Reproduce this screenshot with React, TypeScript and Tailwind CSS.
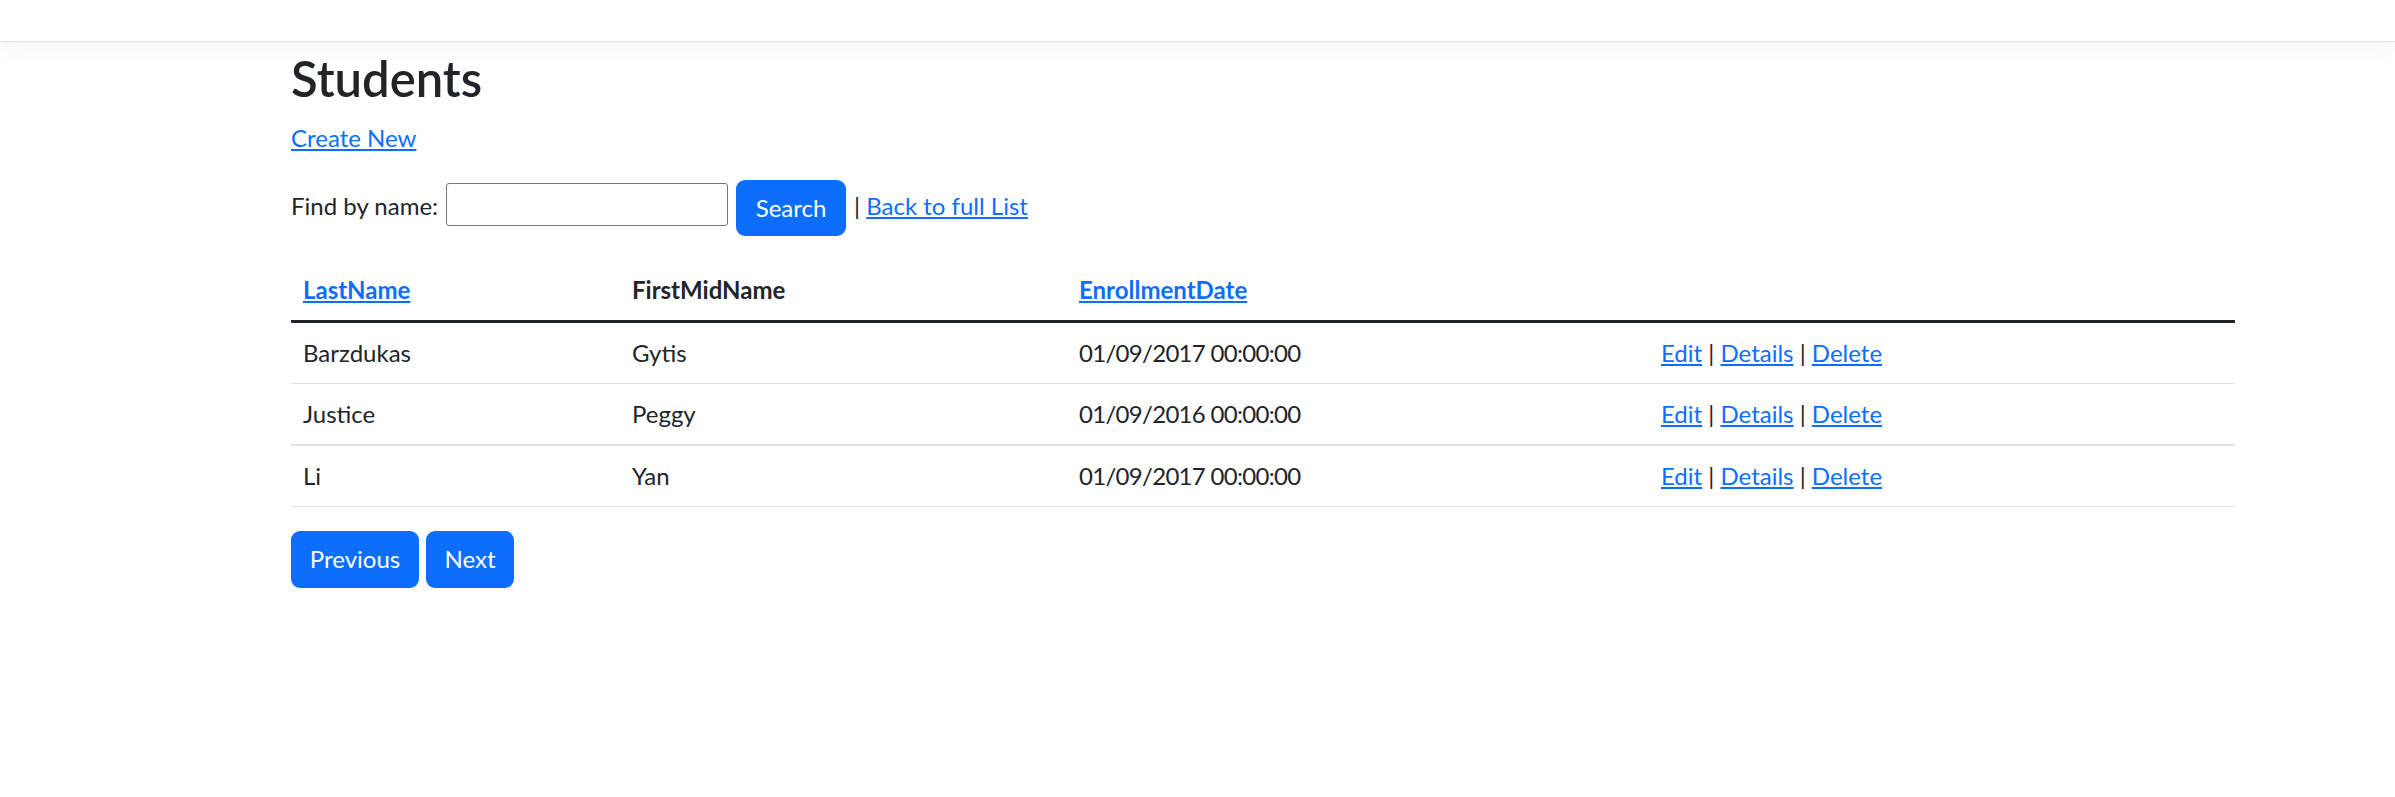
import React from "react";

const rows = [
  { last: "Barzdukas", first: "Gytis", date: "01/09/2017 00:00:00", border: "border-b border-[#dee2e6]" },
  { last: "Justice", first: "Peggy", date: "01/09/2016 00:00:00", border: "border-b-2 border-[#dee2e6]" },
  { last: "Li", first: "Yan", date: "01/09/2017 00:00:00", border: "border-b border-[#dee2e6]" },
];

function Link({ children }: { children: React.ReactNode }) {
  return (
    <a href="#" className="text-[#0d6efd] underline">
      {children}
    </a>
  );
}

export default function App() {
  return (
    <div
      className="min-h-[797px] w-[2395px] bg-white text-[#212529]"
      style={{ fontFamily: 'Lato, "Liberation Sans", sans-serif' }}
    >
      <div className="h-[42px] border-b border-[#dee2e6] bg-white shadow-[0_6px_18px_rgba(0,0,0,0.05)]" />
      <div className="pl-[291px] w-[2235px]">
        <h1 className="mt-[7px] mb-[12px] text-[49px] font-semibold leading-[1.2]">Students</h1>
        <p className="mb-[24px] text-[24px] leading-[36px]">
          <Link>Create New</Link>
        </p>
        <div className="mb-[24px] flex items-start text-[24px] leading-[36px]">
          <span className="mt-[8px]">Find by name:</span>
          <input
            type="text"
            className="mt-[3px] ml-[8px] h-[43px] w-[282px] rounded-[3px] border border-[#767676] bg-white"
          />
          <button className="ml-[8px] h-[56px] w-[110px] rounded-[9px] bg-[#0d6efd] text-center text-[24px] leading-[36px] text-white">
            Search
          </button>
          <span className="mt-[8px] ml-[8px]">
            | <Link>Back to full List</Link>
          </span>
        </div>
        <div className="text-[24px] leading-[36px]">
          <div className="grid grid-cols-[329px_447px_582px_586px] border-b-[3px] border-[#212529] font-bold">
            <div className="h-[60px] px-[12px] pt-[12px]">
              <Link>LastName</Link>
            </div>
            <div className="h-[60px] px-[12px] pt-[12px]">FirstMidName</div>
            <div className="h-[60px] px-[12px] pt-[12px]">
              <Link>EnrollmentDate</Link>
            </div>
            <div className="h-[60px] px-[12px] pt-[12px]" />
          </div>
          {rows.map((r) => (
            <div key={r.last} className={`grid grid-cols-[329px_447px_582px_586px] ${r.border}`}>
              <div className="h-[60px] px-[12px] pt-[12px]">{r.last}</div>
              <div className="h-[60px] px-[12px] pt-[12px]">{r.first}</div>
              <div className="h-[60px] px-[12px] pt-[12px] tracking-[-0.7px]">{r.date}</div>
              <div className="h-[60px] px-[12px] pt-[12px]">
                <Link>Edit</Link> | <Link>Details</Link> | <Link>Delete</Link>
              </div>
            </div>
          ))}
        </div>
        <div className="mt-[24px] flex gap-[7px]">
          <button className="h-[57px] w-[128px] rounded-[9px] bg-[#0d6efd] text-[24px] leading-[36px] text-white">
            Previous
          </button>
          <button className="h-[57px] w-[88px] rounded-[9px] bg-[#0d6efd] text-[24px] leading-[36px] text-white">
            Next
          </button>
        </div>
      </div>
    </div>
  );
}
